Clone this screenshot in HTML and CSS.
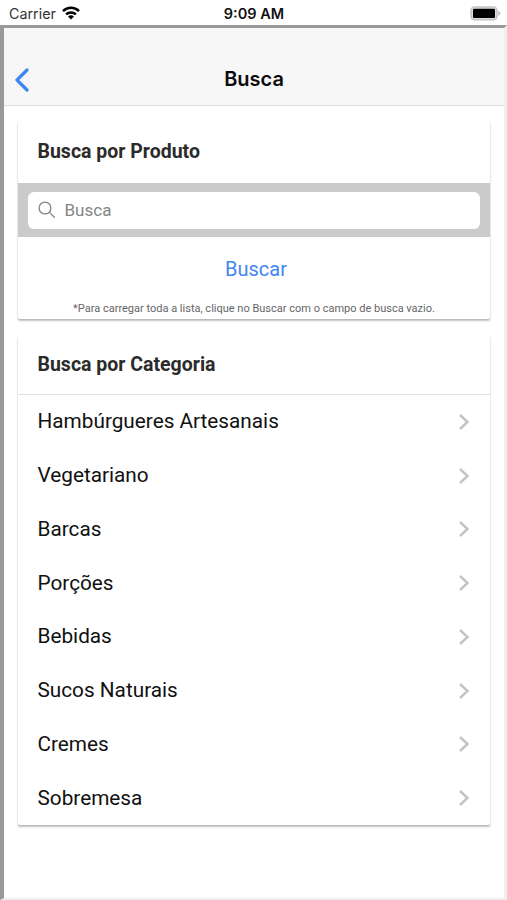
FILE: index.html
```html
<!DOCTYPE html>
<html lang="pt-BR">
<head>
<meta charset="utf-8">
<title>Busca</title>
<link rel="stylesheet" href="styles.css">
</head>
<body>
<div class="status">
  <div class="carrier"><span>Carrier</span>
    <svg class="wifi" viewBox="0 0 18 14"><g fill="none" stroke="#000" stroke-width="2.5"><path d="M1 5.1a11.4 11.4 0 0 1 16 0"/><path d="M4.1 8.4a7 7 0 0 1 9.8 0"/></g><path d="M6 10.6a4.4 4.4 0 0 1 6 0L9 13.6Z"/></svg>
  </div>
  <time class="time">9:09 AM</time>
  <svg class="battery" viewBox="0 0 31 15"><rect x="1" y="1" width="26" height="12.8" rx="3.6" fill="#ddd" stroke="#c4c4c4" stroke-width="1.6"/><rect x="3" y="2.8" width="22" height="9.2" rx="1" fill="#000"/><path d="M28.5 4.7q3 2.6 0 5.2Z" fill="#aaa"/></svg>
</div>
<div class="frame">
  <header class="toolbar">
    <svg class="back" viewBox="0 0 14 24"><path d="M12 2 2 12l10 10" fill="none" stroke="#4285f4" stroke-width="3.2" stroke-linecap="round" stroke-linejoin="round"/></svg>
    <h1 class="title">Busca</h1>
  </header>
  <main class="content">
    <section class="card product">
      <h2 class="card-title">Busca por Produto</h2>
      <div class="searchbar">
        <label class="field">
          <svg class="lens" viewBox="0 0 18 18"><g fill="none" stroke="#858585" stroke-width="1.3" stroke-linecap="round"><circle cx="7" cy="7" r="5.9"/><path d="m11.4 11.4 5 4.9"/></g></svg>
          <input class="input" type="text" placeholder="Busca">
        </label>
      </div>
      <button class="submit">Buscar</button>
      <p class="note">*Para carregar toda a lista, clique no Buscar com o campo de busca vazio.</p>
    </section>
    <section class="card category">
      <h2 class="card-title ruled">Busca por Categoria</h2>
      <ul class="list">
        <li class="row"><span>Hambúrgueres Artesanais</span><svg class="chevron" viewBox="0 0 12 18"><path d="m2 2 7.5 7L2 16"/></svg></li>
        <li class="row"><span>Vegetariano</span><svg class="chevron" viewBox="0 0 12 18"><path d="m2 2 7.5 7L2 16"/></svg></li>
        <li class="row"><span>Barcas</span><svg class="chevron" viewBox="0 0 12 18"><path d="m2 2 7.5 7L2 16"/></svg></li>
        <li class="row"><span>Porções</span><svg class="chevron" viewBox="0 0 12 18"><path d="m2 2 7.5 7L2 16"/></svg></li>
        <li class="row"><span>Bebidas</span><svg class="chevron" viewBox="0 0 12 18"><path d="m2 2 7.5 7L2 16"/></svg></li>
        <li class="row"><span>Sucos Naturais</span><svg class="chevron" viewBox="0 0 12 18"><path d="m2 2 7.5 7L2 16"/></svg></li>
        <li class="row"><span>Cremes</span><svg class="chevron" viewBox="0 0 12 18"><path d="m2 2 7.5 7L2 16"/></svg></li>
        <li class="row"><span>Sobremesa</span><svg class="chevron" viewBox="0 0 12 18"><path d="m2 2 7.5 7L2 16"/></svg></li>
      </ul>
    </section>
  </main>
</div>
</body>
</html>
```
FILE: styles.css
```css
* { box-sizing: border-box; }
body {
  margin: 0;
  height: 900px;
  overflow: hidden;
  display: flex;
  flex-direction: column;
  background: #fff;
  color: #111;
  font-family: Roboto, sans-serif;
}
h1, h2, p, ul { margin: 0; padding: 0; }
.status {
  height: 25px;
  flex: none;
  display: grid;
  grid-template-columns: 1fr auto 1fr;
  align-items: center;
  padding: 2px 6px 0 9px;
  font: 14.3px/20px Inter, sans-serif;
}
.carrier { display: flex; align-items: center; gap: 6px; color: #333; }
.wifi { width: 18px; height: 14px; margin-top: -2px; }
.time { font-size: 14.5px; font-weight: 600; color: #111; margin-left: -2px; }
.battery { width: 31px; height: 15px; justify-self: end; margin-top: -1px; }
.frame {
  flex: 1;
  border-style: solid;
  border-width: 3px 3px 2px 4px;
  border-color: #999 #eee #eee #999;
}
.toolbar {
  height: 78px;
  display: grid;
  grid-template-columns: 40px 1fr 40px;
  align-items: center;
  padding: 25px 0 0;
  background: #f7f7f7;
  border-bottom: 1px solid #dedede;
}
.back { width: 14px; height: 24px; margin-left: 10.5px; margin-top: 1px; }
.title { font: 600 20px/26px Inter, sans-serif; text-align: center; color: #0b0b0b; }
.content { padding: 14px 14px 0; }
.card {
  background: #fff;
  border-radius: 2px;
  box-shadow: 0 2px 2px rgba(0, 0, 0, .22), 0 1px 2px rgba(0, 0, 0, .1);
}
.product { height: 199px; }
.category { height: 490px; margin-top: 16px; }
.card-title {
  height: 63px;
  padding: 3px 20px 0 19.5px;
  font-size: 19.5px;
  line-height: 58px;
  font-weight: 700;
  color: #2b2b2b;
}
.ruled { height: 60px; padding-top: 1px; border-bottom: 1px solid #e2e2e2; }
.searchbar { height: 54px; padding: 8.5px 10px 8.5px 9.5px; background: #cbcbcb; }
.field {
  height: 100%;
  display: flex;
  align-items: center;
  gap: 8.5px;
  padding: 0 10.5px;
  background: #fff;
  border-radius: 6px;
}
.lens { width: 18px; height: 18px; }
.input { flex: 1; border: 0; padding: 0; outline: 0; background: none; font: 17px/24px Roboto, sans-serif; }
.input::placeholder { color: #858585; opacity: 1; }
.submit {
  display: block;
  width: 100%;
  height: 63px;
  border: 0;
  padding: 0 0 0 4px;
  background: none;
  color: #4285f4;
  font: 20px/24px Roboto, sans-serif;
}
.note { font-size: 11px; line-height: 18px; text-align: center; color: #666; }
.list { list-style: none; }
.row {
  height: 53.75px;
  display: flex;
  align-items: center;
  justify-content: space-between;
  padding: 0 20px 0 19.5px;
  font-size: 20.75px;
  line-height: 26px;
}
.row span { margin-top: -1px; }
.chevron { width: 12px; height: 18px; fill: none; stroke: #c3c3c3; stroke-width: 2.4; }
```
